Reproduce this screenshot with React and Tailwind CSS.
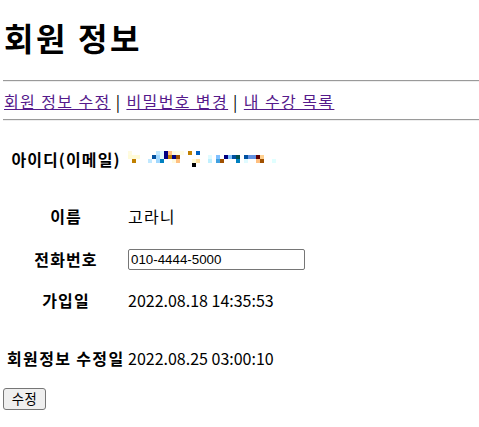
import React from "react";

const blocks = [
  [0, 0, 4, 4, "#fffbe0"],
  [28, 0, 4, 4, "#bfe8ff"],
  [32, 0, 4, 4, "#e0fbff"],
  [36, 0, 4, 4, "#000080"],
  [40, 0, 4, 4, "#ffc080"],
  [44, 0, 4, 4, "#fffbe0"],
  [48, 0, 8, 4, "#fffde8"],
  [60, 0, 4, 4, "#c08000"],
  [68, 0, 4, 4, "#0060c0"],

  [0, 4, 12, 4, "#fffbd8"],
  [24, 4, 4, 4, "#0050a0"],
  [28, 4, 4, 4, "#a0d8ff"],
  [32, 4, 4, 4, "#e0fbff"],
  [36, 4, 4, 4, "#000080"],
  [40, 4, 4, 4, "#c08000"],
  [44, 4, 4, 4, "#000080"],
  [48, 4, 4, 4, "#a05000"],
  [80, 4, 4, 4, "#e0fbff"],
  [88, 4, 4, 4, "#80c0ff"],
  [96, 4, 4, 4, "#000080"],
  [100, 4, 4, 4, "#80c0ff"],
  [104, 4, 4, 4, "#0050a0"],
  [108, 4, 4, 4, "#005050"],
  [116, 4, 4, 4, "#0050a0"],
  [120, 4, 8, 4, "#6090e0"],
  [128, 4, 4, 4, "#600000"],
  [132, 4, 4, 4, "#ffd090"],

  [4, 8, 4, 4, "#c08000"],
  [20, 8, 4, 4, "#c0e8ff"],
  [28, 8, 4, 4, "#a0d8ff"],
  [32, 8, 4, 4, "#0080c0"],
  [44, 8, 4, 4, "#fffbe0"],
  [48, 8, 4, 4, "#ffc080"],
  [64, 8, 4, 4, "#fffbd8"],
  [68, 8, 4, 4, "#ffe0a0"],
  [80, 8, 4, 4, "#c0f0ff"],
  [88, 8, 4, 4, "#40a0e0"],
  [92, 8, 4, 4, "#a05000"],
  [108, 8, 4, 4, "#0080c0"],
  [116, 8, 4, 4, "#e0fbff"],
  [128, 8, 4, 4, "#ffc080"],
  [132, 8, 4, 4, "#a05000"],
  [144, 8, 4, 4, "#e0ffff"],

  [64, 12, 4, 4, "#000000"],
];

function Mosaic() {
  return (
    <svg width="150" height="17" viewBox="0 0 150 17" shapeRendering="crispEdges" className="block">
      {blocks.map((b, i) => (
        <rect key={i} x={b[0]} y={b[1]} width={b[2]} height={b[3]} fill={b[4]} />
      ))}
    </svg>
  );
}

function Row({ label, children, className }) {
  return (
    <div className={"flex h-6 items-center " + className}>
      <div className="w-[125px] shrink-0 pl-[1px] text-center font-bold tracking-[1.1px]">{label}</div>
      <div className="flex items-center">{children}</div>
    </div>
  );
}

export default function App() {
  return (
    <div
      className="min-h-[427px] w-[479px] bg-white pl-[3px] text-[16px] text-black"
      style={{ fontFamily: '"Noto Sans CJK KR", sans-serif' }}
    >
      <h1 className="m-0 pl-[1px] pt-[17px] text-[32px] font-bold leading-[40px] tracking-[2.6px]">회원 정보</h1>
      <hr className="mt-[23px] h-0 border-0 border-t border-b border-t-[#9a9a9a] border-b-[#eeeeee]" />
      <div className="mt-[9px] pl-[1px] leading-[20px] tracking-[1.4px]">
        <a href="#" className="text-[#551a8b] underline">회원 정보 수정</a>
        {" | "}
        <a href="#" className="text-[#551a8b] underline">비밀번호 변경</a>
        {" | "}
        <a href="#" className="text-[#551a8b] underline">내 수강 목록</a>
      </div>
      <hr className="mt-[8px] h-0 border-0 border-t border-b border-t-[#9a9a9a] border-b-[#eeeeee]" />

      <Row label="아이디(이메일)" className="mt-[26px]">
        <Mosaic />
      </Row>
      <Row label="이름" className="mt-[33px]">
        <span className="tracking-[1.2px]">고라니</span>
      </Row>
      <Row label="전화번호" className="mt-[19px]">
        <input
          type="text"
          defaultValue="010-4444-5000"
          className="h-[21px] w-[177px] rounded-[2px] border border-[#767676] px-[2px] text-[13.33px] text-black outline-none"
          style={{ fontFamily: '"Liberation Sans", Arial, sans-serif' }}
        />
      </Row>
      <Row label="가입일" className="mt-[17px]">
        <span>2022.08.18 14:35:53</span>
      </Row>
      <div className="mt-[34px] flex h-6 items-center">
        <span className="w-[125px] shrink-0 pl-[4px] font-bold tracking-[1.35px]">회원정보 수정일</span>
        <span>2022.08.25 03:00:10</span>
      </div>
      <button
        type="button"
        className="mt-[18px] h-[22px] w-[43px] rounded-[3px] border border-[#767676] bg-[#efefef] text-[13.33px] leading-none tracking-[0.5px] text-black"
      >
        수정
      </button>
    </div>
  );
}
